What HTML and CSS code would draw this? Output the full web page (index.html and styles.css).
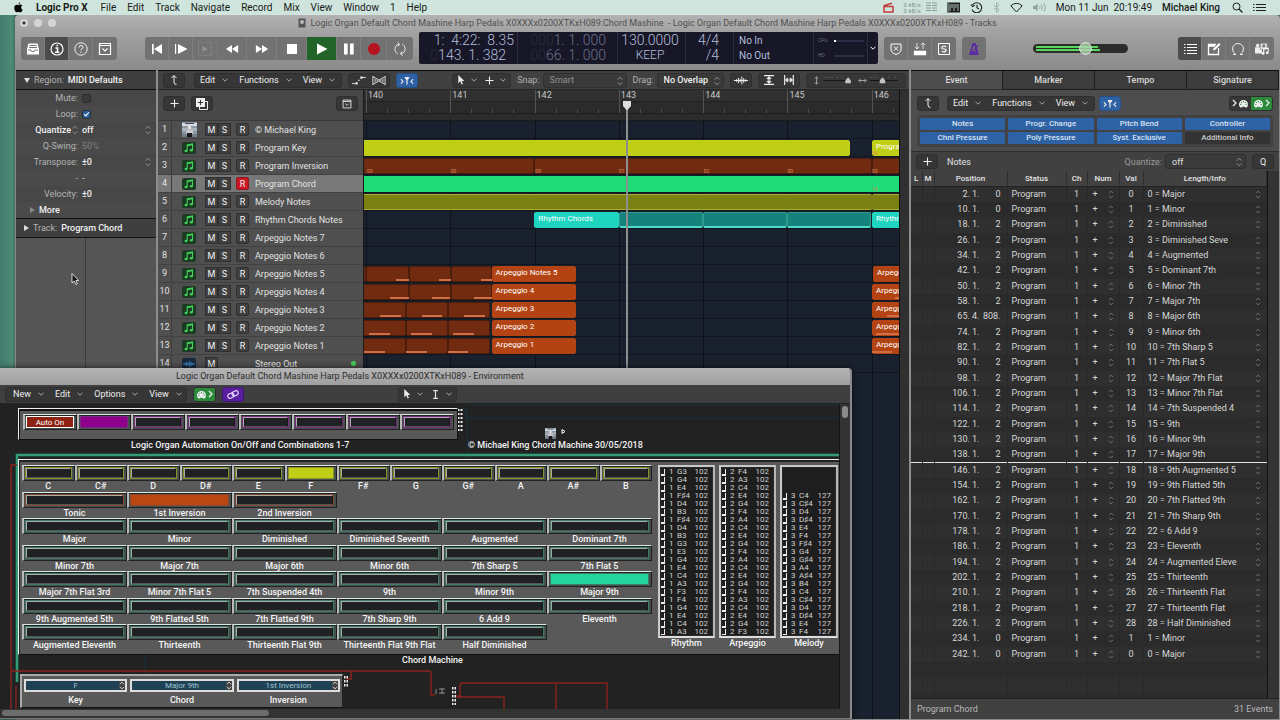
FILE: index.html
```html
<!DOCTYPE html>
<html lang="en">
<head>
<meta charset="utf-8">
<title>Logic Pro X - Tracks</title>
<link rel="stylesheet" href="styles.css">
</head>
<body>
<svg class="defs" aria-hidden="true">
  <symbol id="chev" viewBox="0 0 6 4"><path d="M.5.7 3 3.2 5.500.7" fill="none" stroke="currentColor"/></symbol>
  <symbol id="step" viewBox="0 0 6 10"><path d="M.7 3.600 3 1.200l2.300 2.400M.7 6.400 3 8.800l2.300-2.400" fill="none" stroke="currentColor" stroke-width=".9"/></symbol>
  <symbol id="back" viewBox="0 0 10 12"><path d="M2.500 4 5 1.500 7.500 4M5 1.500V8q0 2.500 2.500 2.500" fill="none" stroke="currentColor"/></symbol>
  <symbol id="catch" viewBox="0 0 16 10"><path d="M1 3.500 3.500 6 1 8.500M15 3.500 12.500 6l2.500 2.500" fill="none" stroke="currentColor" stroke-width="1.200"/><path d="M5.500 1h5v1.500L8.700 4v5.500H7.300V4L5.500 2.500z" fill="currentColor"/></symbol>
  <symbol id="arrow" viewBox="0 0 8 11"><path d="M1 0v9l2.200-2 1.500 3.500 1.500-.7L4.700 6.500h3z" fill="currentColor"/></symbol>
  <symbol id="cross" viewBox="0 0 10 10"><path d="M5 .5v9M.5 5h9" stroke="currentColor" stroke-width="1.200"/></symbol>
  <symbol id="menubox" viewBox="0 0 14 14"><path d="M1.500 1.500h11v11h-11zM1.500 3.500h11M4.500 6.500 7 9l2.500-2.500" fill="none" stroke="currentColor" stroke-width="1.200"/></symbol>
  <symbol id="midi" viewBox="0 0 12 10"><path d="M1 6a5 5 0 0 1 10 0q0 2-1.500 3.500h-2v-1h-3v1h-2Q1 8 1 6z" fill="currentColor"/><g fill="#2c8a3b"><circle cx="3" cy="6" r=".7"/><circle cx="4" cy="3.700" r=".7"/><circle cx="6" cy="2.800" r=".7"/><circle cx="8" cy="3.700" r=".7"/><circle cx="9" cy="6" r=".7"/></g></symbol>
  <symbol id="gt" viewBox="0 0 5 8"><path d="M1 1l3 3-3 3" fill="none" stroke="currentColor" stroke-width="1.300"/></symbol>
  <symbol id="note" viewBox="0 0 12 10"><path d="M4.200 8V2L9.500 1v6" fill="none" stroke="currentColor" stroke-width="1.100"/><path d="M4.200 1.800 9.500.8v1.500l-5.300 1z" fill="currentColor"/><ellipse cx="3" cy="8" rx="1.500" ry="1.200" fill="currentColor"/><ellipse cx="8.300" cy="7.200" rx="1.500" ry="1.200" fill="currentColor"/></symbol>
  <symbol id="wave" viewBox="0 0 16 10"><path d="M0 5h16M3 3.500v3M5 2v6M7 3v4M9 .5v9M11 2.500v5M13 3.500v3" stroke="currentColor" stroke-width="1.100"/></symbol>
  <symbol id="photo" viewBox="0 0 15 15"><path d="M0 0h15v15H0z" fill="#8c97a4"/><path d="M0 1h15v3H0z" fill="#d4dbe4"/><path d="M3 1h9v1H3z" fill="#44484e"/><path d="M0 6h15v3H0z" fill="#a9b3be"/><path d="M0 12h15v3H0z" fill="#737d88"/><circle cx="7.500" cy="5.500" r="1.800" fill="#e4e0da"/><path d="M4.500 8h6l1 4H4z" fill="#c8c8cc"/><path d="M5 11h5v4H5z" fill="#17191c"/></symbol>
</svg>

<header class="menubar">
  <nav class="menus">
    <svg class="apple" viewBox="0 0 10 12"><path d="M6.800.2q.1 1.800-1.700 2.400Q5 .9 6.800.2zM5 3.400c.7 0 1.200-.6 2.200-.6q1.300.1 2 1.100C7.200 5.200 7.600 7.700 9.600 8.400 9 10 8 11.400 7 11.400c-.8 0-1-.4-1.900-.4s-1.200.4-1.900.4C1.700 11.400.3 8.700.3 6.500c0-2.300 1.400-3.600 2.800-3.600.9 0 1.300.5 1.900.5z"/></svg>
    <button class="app">Logic Pro X</button><button>File</button><button>Edit</button><button>Track</button><button>Navigate</button><button>Record</button><button>Mix</button><button>View</button><button>Window</button><button>1</button><button>Help</button>
  </nav>
  <div class="status">
    <svg class="i11" viewBox="0 0 11 11"><path d="M1 4.500h9v5.500H1zM.8 3.800 9 1.200" fill="none" stroke="#c33b3b" stroke-width="1.500"/></svg>
    <span class="rate">0 kB/s<br>0 kB/s</span>
    <svg class="i11" viewBox="0 0 11 11"><path d="M0 1h5M6 1h5M0 3.500h5M6 3.500h5M0 6h5M6 6h5M0 8.500h5M6 8.500h5" stroke="#8b9b94" stroke-width="1.200"/></svg>
    <svg class="i13" viewBox="0 0 13 11"><path d="M0 .5h13v10H0z" fill="#1b1f1d"/><path d="M3 2v7M5 2v4M7 2v7M9 2v4M11 2v7M1 1v9" stroke="#cfe5dc" stroke-width=".8"/></svg>
    <svg class="i13" viewBox="0 0 13 11"><path d="M2.500 3a5 5 0 1 1-.5 4.500M7 2.800v3l2 1.200M1 2.500l1.500 2L4.800 3.300" fill="none" stroke="#1b1f1d" stroke-width="1.100"/></svg>
    <svg class="i7" viewBox="0 0 7 11"><path d="m1 3 5 5-2.500 2.500V.5L6 3 1 8" fill="none" stroke="#a3b3ab"/></svg>
    <svg class="i13" viewBox="0 0 13 11"><path d="M.8 3.800q5.700-5 11.400 0L6.500 10z" fill="none" stroke="#1b1f1d"/></svg>
    <svg class="i13" viewBox="0 0 14 11"><path d="M0 4h2l3-2.500v8L2 7H0z" fill="#93a39b"/><path d="M7 4q1.500 1.500 0 3M9 2.500q2.700 3 0 6M11.500 1q3.500 4.500 0 9" fill="none" stroke="#93a39b"/></svg>
    <span>Mon 11 Jun &nbsp;20:19:49</span>
    <span class="user">Michael King</span>
    <svg class="i11" viewBox="0 0 11 11"><circle cx="4.500" cy="4.500" r="3.500" fill="none" stroke="#1b1f1d"/><path d="m7 7 3.500 3.500" stroke="#1b1f1d" stroke-width="1.300"/></svg>
    <svg class="i13" viewBox="0 0 13 11"><path d="M0 2.500h1.500M3 2.500h10M0 5.500h1.500M3 5.500h10M0 8.500h1.500M3 8.500h10" stroke="#1b1f1d" stroke-width="1.200"/></svg>
  </div>
</header>

<main class="window">
  <div class="titlebar">
    <span class="lights"><i class="dot"></i><i></i><i></i></span>
    <svg class="doc" viewBox="0 0 8 10"><path d="M.5.5h7v9h-7z" fill="#555"/><circle cx="4" cy="4" r="2" fill="#bbb"/></svg>
    <h1>Logic Organ Default Chord Mashine Harp Pedals X0XXXx0200XTKxH089:Chord Mashine&nbsp; - Logic Organ Default Chord Mashine Harp Pedals X0XXXx0200XTKxH089 - Tracks</h1>
  </div>

  <div class="control">
    <div class="cgroup">
      <button aria-label="Library"><svg viewBox="0 0 14 14"><path d="M2.500 1.500h9L13 7v5.500H1V7z" fill="#fff"/><path d="M3.500 3.500h7M3 5.500h8" stroke="#777"/><path d="M2 8h3l.7 1.500h2.600L9 8h3" fill="none" stroke="#777"/></svg></button>
      <button class="on" aria-label="Inspector"><svg viewBox="0 0 14 14"><circle cx="7" cy="7" r="6" fill="none" stroke="#fff" stroke-width="1.200"/><path d="M5.500 6h2v4M5 10.200h4.200M6.500 3.600h1.500" stroke="#fff" stroke-width="1.500" fill="none"/></svg></button>
      <button aria-label="Quick Help"><svg viewBox="0 0 14 14"><circle cx="7" cy="7" r="6.200" fill="none" stroke="#f2f2f2"/><path d="M5 5.500q0-2 2-2t2 1.700q0 1.300-2 2.300v1M7 9.700v1.200" stroke="#f2f2f2" fill="none"/></svg></button>
      <button aria-label="Toolbar"><svg viewBox="0 0 14 14"><use href="#menubox"/></svg></button>
    </div>
    <div class="cgroup transport">
      <button aria-label="To beginning"><svg viewBox="0 0 14 14"><path d="M2 2h1.700v10H2zM12 2v10L4 7z" fill="#fff"/></svg></button>
      <button aria-label="Play from selection"><svg viewBox="0 0 14 14"><path d="M1 2h1.200v10H1zM4 2v10l9.500-5z" fill="#fff"/></svg></button>
      <button class="off" aria-label="Play marquee"><svg viewBox="0 0 16 16"><path d="M.5.500h15v15H.5z" fill="none" stroke="#b5b5b5" stroke-dasharray="1 1"/><path d="M5 4.500v7l6-3.500z" fill="#b5b5b5"/></svg></button>
      <button class="wide" aria-label="Rewind"><svg viewBox="0 0 16 14"><path d="M8 2.500v9L1 7zM15 2.500v9L8 7z" fill="#fff"/></svg></button>
      <button class="wide" aria-label="Forward"><svg viewBox="0 0 16 14"><path d="M1 2.500v9L8 7zM8 2.500v9l7-4.500z" fill="#fff"/></svg></button>
      <button class="wide" aria-label="Stop"><svg viewBox="0 0 14 14"><path d="M2 2h10v10H2z" fill="#fff"/></svg></button>
      <button class="wide play" aria-label="Play"><svg viewBox="0 0 14 14"><path d="M2 1.500v11L12.500 7z" fill="#fff"/></svg></button>
      <button aria-label="Pause"><svg viewBox="0 0 14 14"><path d="M2 1.500h3.700v11H2zM8 1.500h3.700v11H8z" fill="#fff"/></svg></button>
      <button class="mid" aria-label="Record"><svg viewBox="0 0 14 14"><circle cx="7" cy="7" r="6" fill="#b5131d"/></svg></button>
      <button class="mid" aria-label="Cycle"><svg viewBox="0 0 14 14"><path d="M5 12A5.300 5.300 0 0 1 4 3L6 2M9 2a5.300 5.300 0 0 1 1 9l-2 1M4.500.5 6.500 2l-1.300 2.300M9.500 13.500 7.500 12l1.300-2.300" fill="none" stroke="#e6e6e6"/></svg></button>
    </div>
    <div class="lcd">
      <div class="time"><span>1: &nbsp;4:22: &nbsp;8.35</span><span class="in"><i>0</i>143. 1. 382</span></div>
      <div class="loc"><span><i>000</i>1. 1. 000</span><span><i>00</i>66. 1. 000</span></div>
      <div class="tempo"><span>130.0000</span><span class="keep">KEEP</span></div>
      <div class="sig"><span>4/4</span><span>/4</span></div>
      <div class="io"><span>No In</span><span>No Out</span></div>
      <div class="meters"><span>CPU<b><u></u></b></span><span>HD<b></b></span></div>
      <button aria-label="Display mode"><svg class="cv" viewBox="0 0 6 4"><use href="#chev"/></svg></button>
    </div>
    <div class="cgroup">
      <button aria-label="Replace"><svg viewBox="0 0 14 14"><path d="M2 2h10v5q0 4-5 5.500Q2 11 2 7zM5 4.500 9 8.500M9 4.500 5 8.500" fill="none" stroke="#fff"/></svg></button>
      <button aria-label="Autopunch"><svg viewBox="0 0 14 16"><path d="M0 10h14v5H0z" fill="#fff"/><path d="M3.500 1v7M1 5.500 3.500 8 6 5.500M10.500 8V1M8 3.500 10.500 1 13 3.500" fill="none" stroke="#eee"/></svg></button>
      <button aria-label="Solo"><svg viewBox="0 0 14 14"><path d="M1.500 1.500h11v11h-11z" fill="none" stroke="#fff"/><path d="M9 5Q8.500 4 7 4T5 5.500 7 7t2 1.500T7 10 5 9" fill="none" stroke="#fff" stroke-width="1.200"/></svg></button>
    </div>
    <div class="cgroup">
      <button aria-label="Metronome"><svg viewBox="0 0 14 14"><path d="M5.500 1h3l3.500 12H2zM6.300 4 5 9.500h4L7.700 4z" fill="#5b2aa6" fill-rule="evenodd"/><path d="m6 10 5-7" stroke="#5b2aa6" stroke-width="1.200"/></svg></button>
    </div>
    <div class="master"><i></i><i class="b"></i><input type="range" min="0" max="100" value="56" aria-label="Master volume"></div>
    <div class="cgroup last">
      <button class="on" aria-label="List editors"><svg viewBox="0 0 14 14"><path d="M1 2.500h1.500M4 2.500h10M1 5.500h1.500M4 5.500h10M1 8.500h1.500M4 8.500h10M1 11.500h1.500M4 11.500h10" stroke="#fff"/></svg></button>
      <button aria-label="Note pad"><svg viewBox="0 0 14 14"><path d="M9 2.500H1.500v10h10V6M1.500 4H8" fill="none" stroke="#fff" stroke-width="1.300"/><path d="m6 8.500.6-2L12 1l1.500 1.500L8 8z" fill="#fff"/></svg></button>
      <button aria-label="Loops"><svg viewBox="0 0 14 14"><path d="M2 12.500h3Q1.500 10.500 1.500 7a5.500 5.500 0 0 1 11 0q0 3.500-3.500 5.500h3" fill="none" stroke="#eee"/></svg></button>
      <button aria-label="Browsers"><svg viewBox="0 0 16 14"><path d="M0 5h8v7H0z" fill="#eee"/><circle cx="3" cy="3" r="2" fill="#eee"/><path d="M6 .5h8v7H6z" fill="#ddd" stroke="#777" stroke-width=".6"/><circle cx="10" cy="3.500" r="1.700" fill="#777"/><path d="M10 12V7l5-1v5" fill="none" stroke="#fff" stroke-width="1.200"/><circle cx="9.300" cy="12" r="1.500" fill="#fff"/><circle cx="14" cy="11.300" r="1.500" fill="#fff"/></svg></button>
    </div>
  </div>

  <div class="panes">
    <aside class="inspector">
      <h2><b class="tri open"></b><span>Region:</span> MIDI Defaults</h2>
      <div class="params">
        <div><label for="mute">Mute:</label><input type="checkbox" id="mute"></div>
        <div><label for="loop">Loop:</label><input type="checkbox" id="loop" checked></div>
        <div><label class="hot" for="quant">Quantize<svg class="st" viewBox="0 0 6 10"><use href="#step"/></svg></label><output id="quant">off</output><svg class="st" viewBox="0 0 6 10"><use href="#step"/></svg></div>
        <div><span class="lab">Q-Swing:</span><output class="faint">50%</output></div>
        <div><span class="lab">Transpose:</span><output>±0</output><svg class="st" viewBox="0 0 6 10"><use href="#step"/></svg></div>
        <div><span class="lab">-</span><output class="grey">-</output></div>
        <div><span class="lab">Velocity:</span><output>±0</output></div>
        <div class="more"><b class="tri dark"></b>More</div>
      </div>
      <h2 class="tr"><b class="tri"></b><span>Track:</span> Program Chord</h2>
      <div class="strip"></div>
    </aside>

    <section class="tracks">
      <div class="tbar">
        <div class="seg"><button aria-label="Back"><svg class="i12" viewBox="0 0 10 12"><use href="#back"/></svg></button></div>
        <div class="seg menu"><button>Edit<svg class="cv" viewBox="0 0 6 4"><use href="#chev"/></svg></button><button>Functions<svg class="cv" viewBox="0 0 6 4"><use href="#chev"/></svg></button><button>View<svg class="cv" viewBox="0 0 6 4"><use href="#chev"/></svg></button></div>
        <div class="seg"><button aria-label="Automation"><svg class="i14" viewBox="0 0 16 10"><path d="M0 8.500h4M11 1.500h5" stroke="currentColor"/><path d="M4 7h2.500v2.500H4zM9.500.5H12V3H9.500zM7 4h1.500v1.500H7z" fill="currentColor"/></svg></button><button aria-label="Flex"><svg class="i14" viewBox="0 0 16 12"><path d="M1 1v10M15 1v10M1 1.500l7 4 7-4M1 10.500l7-4 7 4M3.500 4v4M6 5v2M10 5v2M12.500 4v4" fill="none" stroke="currentColor"/></svg></button></div>
        <div class="seg blue"><button aria-label="Catch playhead"><svg class="i14" viewBox="0 0 16 10"><use href="#catch"/></svg></button></div>
        <div class="seg tools"><button aria-label="Pointer"><svg class="ar" viewBox="0 0 8 11"><use href="#arrow"/></svg><svg class="cv" viewBox="0 0 6 4"><use href="#chev"/></svg></button><button aria-label="Marquee"><svg class="i9" viewBox="0 0 10 10"><use href="#cross"/></svg><svg class="cv" viewBox="0 0 6 4"><use href="#chev"/></svg></button></div>
        <label for="snap">Snap:</label><span class="sel snap"><select id="snap"><option>Smart</option></select><svg class="st" viewBox="0 0 6 10"><use href="#step"/></svg></span>
        <label for="drag">Drag:</label><span class="sel drag"><select id="drag"><option>No Overlap</option></select><svg class="st" viewBox="0 0 6 10"><use href="#step"/></svg></span>
        <div class="seg"><button aria-label="Waveform zoom"><svg class="i14" viewBox="0 0 16 10"><use href="#wave"/></svg></button></div>
        <div class="seg"><button aria-label="Fit vertically"><svg class="i10" viewBox="0 0 10 10"><path d="M0 .7h10M0 9.300h10M5 2v6M3 4l2-2 2 2M3 6l2 2 2-2" fill="none" stroke="currentColor" stroke-width="1.200"/></svg></button><button aria-label="Fit horizontally"><svg class="i10" viewBox="0 0 10 10"><path d="M.7 0v10M9.300 0v10M2 5h6M4 3 2 5l2 2M6 3l2 2-2 2" fill="none" stroke="currentColor" stroke-width="1.200"/></svg></button></div>
        <div class="seg zooms"><svg viewBox="0 0 100 14"><path d="M7.500 3v8M5.500 5l2-2 2 2M5.500 9l2 2 2-2M53 7h8M55 5l-2 2 2 2M59 5l2 2-2 2" fill="none" stroke="#aaa"/><path d="M15 7h30M65 7h30" stroke="#111"/><path d="M16 3v1M19 3v1M22 3v1M25 3v1M30 3v1M35 3v1M66 3v1M69 3v1M72 3v1M85 3v1M92 3v1" stroke="#777"/><path d="M41.500 3.500 38.500 7v3h6V7zM78.500 3.500 75.500 7v3h6V7z" fill="#c4c4c4"/></svg></div>
      </div>
      <div class="arrange">
        <div class="heads">
          <div class="addbar">
            <div class="seg"><button aria-label="Add track"><svg class="i9" viewBox="0 0 10 10"><use href="#cross"/></svg></button></div>
            <div class="seg"><button aria-label="Duplicate track"><svg class="i12" viewBox="0 0 12 12"><path d="M3.500 3.500h8v8h-8z" fill="none" stroke="currentColor"/><path d="M0 0h9v9H0z" fill="currentColor"/><path d="M4.500 2v5M2 4.500h5" stroke="#333"/></svg></button></div>
            <div class="seg end"><button aria-label="Header options"><svg class="i10" viewBox="0 0 14 14"><use href="#menubox"/></svg></button></div>
          </div>
          <ol id="heads"></ol>
        </div>
        <div class="timeline">
          <div class="ruler" id="ruler"></div>
          <div class="lanes" id="lanes"></div>
          <div class="playhead"><svg viewBox="0 0 10 10"><path d="M1 0h8v5L5 9.500 1 5z" fill="#dedede"/></svg></div>
        </div>
        <div class="vstrip"></div>
      </div>
    </section>

    <section class="lists">
      <div class="tabs" role="tablist"><button role="tab" class="cur">Event</button><button role="tab">Marker</button><button role="tab">Tempo</button><button role="tab">Signature</button></div>
      <div class="lbar">
        <div class="seg"><button aria-label="Back"><svg class="i12" viewBox="0 0 10 12"><use href="#back"/></svg></button></div>
        <div class="seg menu"><button>Edit<svg class="cv" viewBox="0 0 6 4"><use href="#chev"/></svg></button><button>Functions<svg class="cv" viewBox="0 0 6 4"><use href="#chev"/></svg></button><button>View<svg class="cv" viewBox="0 0 6 4"><use href="#chev"/></svg></button></div>
        <div class="seg blue"><button aria-label="Catch playhead"><svg class="i14" viewBox="0 0 16 10"><use href="#catch"/></svg></button></div>
        <div class="seg end midi"><button aria-label="MIDI in"><svg class="gt" viewBox="0 0 5 8"><use href="#gt"/></svg><svg class="md" viewBox="0 0 12 10"><use href="#midi"/></svg></button><button class="go" aria-label="MIDI out"><svg class="md" viewBox="0 0 12 10"><use href="#midi"/></svg><svg class="gt" viewBox="0 0 5 8"><use href="#gt"/></svg></button></div>
      </div>
      <div class="filters"><button>Notes</button><button>Progr. Change</button><button>Pitch Bend</button><button>Controller</button><button>Chnl Pressure</button><button>Poly Pressure</button><button>Syst. Exclusive</button><button class="no">Additional Info</button></div>
      <div class="addrow">
        <div class="seg"><button aria-label="Add event"><svg class="i9" viewBox="0 0 10 10"><use href="#cross"/></svg></button></div>
        <span>Notes</span>
        <label for="q">Quantize:</label><span class="sel q"><select id="q"><option>off</option></select><svg class="st" viewBox="0 0 6 10"><use href="#step"/></svg></span>
        <div class="seg"><button>Q</button></div>
      </div>
      <div class="events">
        <table>
          <colgroup><col class="c1"><col class="c2"><col class="c3"><col class="c4"><col class="c5"><col class="c6"><col class="c7"><col></colgroup>
          <thead><tr><th>L</th><th>M</th><th>Position</th><th>Status</th><th>Ch</th><th>Num</th><th>Val</th><th>Length/Info</th></tr></thead>
          <tbody id="events"></tbody>
        </table>
        <div class="gutter"></div>
      </div>
      <footer><span>Program Chord</span><span>31 Events</span></footer>
    </section>
  </div>
</main>

<section class="env">
  <h2>Logic Organ Default Chord Mashine Harp Pedals X0XXXx0200XTKxH089 - Environment</h2>
  <div class="ebar">
    <div class="seg menu"><button>New<svg class="cv" viewBox="0 0 6 4"><use href="#chev"/></svg></button><button>Edit<svg class="cv" viewBox="0 0 6 4"><use href="#chev"/></svg></button><button>Options<svg class="cv" viewBox="0 0 6 4"><use href="#chev"/></svg></button><button>View<svg class="cv" viewBox="0 0 6 4"><use href="#chev"/></svg></button></div>
    <div class="seg go"><button aria-label="MIDI out"><svg class="md" viewBox="0 0 12 10"><use href="#midi"/></svg><svg class="gt" viewBox="0 0 5 8"><use href="#gt"/></svg></button></div>
    <div class="seg link"><button aria-label="Link"><svg class="i14" viewBox="0 0 14 12"><g fill="none" stroke="#ece0ff" stroke-width="1.200"><rect x="1" y="5" width="7" height="5" rx="2.500" transform="rotate(-25 4 7)"/><rect x="6" y="2" width="7" height="5" rx="2.500" transform="rotate(-25 10 5)"/></g></svg></button></div>
    <div class="seg tools"><button aria-label="Pointer"><svg class="ar" viewBox="0 0 8 11"><use href="#arrow"/></svg><svg class="cv" viewBox="0 0 6 4"><use href="#chev"/></svg></button><button aria-label="Text tool"><svg class="i9" viewBox="0 0 10 10"><path d="M2.500.7h5M2.500 9.300h5M5 .7v8.600" stroke="currentColor" stroke-width="1.200"/></svg><svg class="cv" viewBox="0 0 6 4"><use href="#chev"/></svg></button></div>
  </div>
  <div class="stage">
    <div class="canvas">
      <svg class="cables" viewBox="0 0 840 305" aria-hidden="true">
        <g fill="none">
          <path d="M12 305V50h8M145 12V5h322v50M145 1v304M466 14h374M466 5v9M466 1h374" stroke="#17313d"/>
          <path d="M17 278V51h823" stroke="#1d6e52" stroke-width="3"/><path d="M17 278V51h823" stroke="#4fc79c"/>
          <path d="M17 61h-6v244M11 267h418q2 0 2 3v21h4M345 275h6v-8M16 282v23M454 292h6v-10q0-3 3-3h144v26M556 279v26M457 293h47v12" stroke="#8a231c" stroke-width="1.400"/>
        </g>
        <path d="M460 5v22" stroke="#eee" stroke-width="5" stroke-dasharray="2 2"/>
        <path d="M460 5v22" stroke="#222" stroke-width="1"/>
        <path d="M346 272v12M454 283v18" stroke="#eee" stroke-width="4" stroke-dasharray="2.500 1.500"/>
        <path d="M346 272v12M454 283v18" stroke="#222"/>
        <path d="M436 290v-5M439 285h6M439 289h6M442 284v6" stroke="#888"/>
      </svg>
      <div class="node autop" id="auto"></div>
      <p class="node cap cap1">Logic Organ Automation On/Off and Combinations 1-7</p>
      <svg class="node pic" viewBox="0 0 15 15"><use href="#photo"/></svg>
      <svg class="node jack" viewBox="0 0 5 5"><path d="M1 .5 4 2.500 1 4.500z" fill="#222" stroke="#fff"/></svg>
      <p class="node cap cap2">© Michael King Chord Machine 30/05/2018</p>
      <div class="node machine">
        <div class="pads" id="pads"></div>
        <div class="mons" id="mons"></div>
      </div>
      <p class="node cap cap3">Chord Machine</p>
      <div class="node picks">
        <label>
          <span class="sel"><select><option>F</option></select><svg class="st" viewBox="0 0 6 10"><use href="#step"/></svg></span>Key</label>
        <label>
          <span class="sel"><select><option>Major 9th</option></select><svg class="st" viewBox="0 0 6 10"><use href="#step"/></svg></span>Chord</label>
        <label>
          <span class="sel"><select><option>1st Inversion</option></select><svg class="st" viewBox="0 0 6 10"><use href="#step"/></svg></span>Inversion</label>
      </div>
    </div>
    <div class="vscroll"><i></i></div>
  </div>
  <div class="hscroll"><i></i></div>
</section>

<svg class="pointer" viewBox="0 0 8 12"><path d="M1 .5v9.500l2.200-2L4.700 11.500l1.600-.7L4.900 7.500h2.800z" fill="#111" stroke="#fff" stroke-width=".8"/></svg>
<script src="app.js"></script>
</body>
</html>
```
FILE: styles.css
```css
* { box-sizing: border-box; margin: 0; padding: 0; }
body { font: 9px/12px Roboto, "Liberation Sans", sans-serif; height: 100vh; min-height: 720px; display: flex; flex-direction: column; position: relative; overflow: hidden; color: #e2e2e2; background: linear-gradient(90deg, #3f7c6a, #508a78 12px, #3e6457 16px); }
button, select, input { font: inherit; color: inherit; background: none; border: 0; }
button { display: flex; align-items: center; justify-content: center; white-space: nowrap; }
i, u { font-style: normal; text-decoration: none; }
ol { list-style: none; }
.defs { position: absolute; width: 0; height: 0; }
svg { display: block; flex: none; }

.menubar { height: 15px; flex: none; display: flex; justify-content: space-between; align-items: center; background: #cfe4dc; color: #161a18; font-size: 10px; padding: 0 14px; }
.menus, .status { display: flex; align-items: center; }
.menus { gap: 11px; }
.apple { width: 9px; height: 11px; margin-right: 2px; }
.app { font-weight: 700; margin-right: 2px; }
.status { gap: 10px; }
.rate { font-size: 6px; line-height: 6px; color: #7f8f88; margin-right: -5px; }
.i7 { width: 7px; height: 11px; }
.i9 { width: 9px; height: 9px; }
.i10 { width: 10px; height: 10px; }
.i11 { width: 11px; height: 11px; }
.i12 { width: 12px; height: 12px; }
.i13 { width: 13px; height: 11px; }
.i14 { width: 14px; height: 11px; }
.user { font-weight: 500; margin-right: 2px; }

.window { flex: 1; min-height: 0; margin-left: 15px; display: flex; flex-direction: column; background: linear-gradient(#b2b2b2, #a3a3a3 16px, #8b8b8b 54px, #8b8b8b); border-radius: 4px 4px 0 0; padding: 0 1px 1px 1px; }
.titlebar { height: 16px; flex: none; display: flex; align-items: center; justify-content: center; position: relative; color: #505050; }
.titlebar h1 { font-size: 9px; font-weight: 400; white-space: nowrap; }
.doc { width: 8px; height: 10px; margin-right: 4px; }
.lights { position: absolute; left: 4px; top: 4px; display: flex; gap: 6px; }
.lights i { width: 8px; height: 8px; border-radius: 50%; background: #d4d4d4; }
.lights .dot { background: radial-gradient(#333 1px, #d4d4d4 2px); }
.control { height: 39px; flex: none; display: flex; align-items: center; padding: 0 5px 4px 5px; gap: 6px; }
.cgroup { display: flex; height: 23px; border-radius: 3px; background: #727272; overflow: hidden; flex: none; }
.cgroup button { width: 24px; border-right: 1px solid #7e7e7e; color: #fff; }
.cgroup button:last-child { border-right: 0; }
.cgroup svg { width: 14px; height: 14px; }
.cgroup .on { background: #4b4b4b; }
.transport { margin-left: 22px; }
.transport button.wide { width: 30px; }
.transport button.mid { width: 26px; }
.transport .play { background: #226329; }
.transport .off { opacity: .5; }
.lcd { flex: 0 1 459px; height: 32px; display: flex; background: #171728; color: #b3bedb; font-size: 14px; line-height: 15px; font-weight: 300; border-radius: 2px; margin-top: -1px; }
.lcd > div { border-right: 1px solid #2b2b42; padding: 1px 3px 0 0; display: flex; flex-direction: column; text-align: right; white-space: nowrap; }
.lcd i { color: #2b2b3f; }
.lcd .time { width: 99px; }
.lcd .in { padding-right: 8px; }
.lcd .loc { width: 100px; padding-right: 11px; color: #6b7188; }
.lcd .tempo { width: 68px; text-align: center; }
.lcd .keep { font-size: 12px; }
.lcd .sig { width: 48px; padding-right: 14px; }
.lcd .io { width: 80px; font-size: 10px; text-align: left; padding-left: 5px; font-weight: 400; }
.lcd .meters { flex: 1; font-size: 5px; padding-left: 4px; }
.meters span { display: flex; align-items: center; justify-content: space-between; color: #8b90a5; }
.meters b { width: 30px; height: 2px; background: #2c2c44; }
.meters u { display: block; width: 2px; height: 2px; background: #fff; }
.lcd button { width: 10px; }
.cv { width: 6px; height: 4px; color: #a8a8a8; margin-left: 7px; }
.lcd .cv { color: #fff; margin: 0; }
.master { width: 95px; height: 9px; border-radius: 5px; background: #2b2b29; margin-left: auto; position: relative; padding: 2px 3px; display: flex; flex-direction: column; gap: 1px; }
.master i { height: 2px; width: 62px; background: #55d85d; }
.master .b { width: 64px; }
.master input { position: absolute; inset: -3px 0; width: 95px; height: 15px; appearance: none; }
.master input::-webkit-slider-thumb { appearance: none; width: 13px; height: 13px; border-radius: 50%; background: #b3d8b3cc; border: 1px solid #ddd; }
.last { margin-left: 44px; }

.panes { flex: 1; min-height: 0; display: flex; gap: 2px; background: #8d8d8d; }
.panes > * { border-top: 1px solid #0c0c0c; }
.inspector { width: 140px; flex: none; background: #555; display: flex; flex-direction: column; }
.inspector h2 { font-size: 9px; font-weight: 500; height: 19px; display: flex; align-items: center; gap: 4px; padding-left: 8px; background: #3f3f3f; border-bottom: 1px solid #111; color: #f0f0f0; }
.inspector h2 span { color: #b4b4b4; font-weight: 400; }
.tri { border: 3px solid transparent; border-left: 5px solid #ddd; border-right: 0; }
.tri.open { border: 3px solid transparent; border-top: 5px solid #ddd; border-bottom: 0; }
.tri.dark { border-left-color: #888; margin-right: 4px; }
.params { background: #4a4a4a; border-bottom: 1px solid #111; }
.params div { height: 16px; display: flex; align-items: center; gap: 4px; padding-right: 5px; }
.params div:nth-child(odd) { background: #474747; }
.params div > :first-child:not(b) { width: 62px; text-align: right; color: #b4b4b4; flex: none; }
.params output { flex: 1; color: #f0f0f0; font-weight: 500; }
.params .faint { color: #757575; }
.params .grey { color: #b4b4b4; }
.params div > label.hot:first-child { color: #f0f0f0; display: flex; align-items: center; justify-content: flex-end; gap: 1px; font-weight: 500; }
.params input { appearance: none; width: 9px; height: 9px; border-radius: 2px; background: #3a3a3a; border: 1px solid #2c2c2c; }
.params input:checked { background: #2c5f9e; position: relative; }
.params input:checked::after { content: ""; position: absolute; left: 2px; top: 0; width: 2px; height: 4px; border: solid #fff; border-width: 0 1px 1px 0; transform: rotate(40deg); }
.params .more { padding-left: 14px; gap: 0; color: #f0f0f0; font-weight: 500; }
.st { width: 6px; height: 10px; color: #9a9a9a; }
.strip { flex: 1; background: linear-gradient(90deg, #555 69px, #3c3c3c 69px, #3c3c3c 70px, #555 70px); }

.tracks { flex: 1; min-width: 0; display: flex; flex-direction: column; background: #484848; }
.tbar { height: 19px; flex: none; display: flex; align-items: center; padding: 0 5px; gap: 6px; background: #414141; border-bottom: 1px solid #262626; overflow: hidden; }
.seg { display: flex; height: 15px; border-radius: 3px; background: #363636; border: 1px solid #2f2f2f; color: #eee; overflow: hidden; flex: none; }
.seg button { min-width: 20px; padding: 0 3px; }
.seg.menu button { padding: 0 6px 0 5px; }
.seg.blue { background: #2f62a5; border-color: #27508a; }
.seg.tools button { padding: 0 4px; }
.seg.tools .cv { margin-left: 6px; }
.ar { width: 8px; height: 10px; }
.tbar .seg:nth-child(2) { margin-left: 3px; }
.tbar .tools { margin-left: 28px; }
.tbar label { color: #b0b0b0; margin-right: -3px; }
.zooms { width: 100px; }
.zooms svg { width: 98px; height: 13px; }
.sel { position: relative; display: flex; height: 15px; border-radius: 3px; background: #3a3a3a; border: 1px solid #2f2f2f; flex: none; }
.sel select { appearance: none; width: 100%; padding-left: 6px; outline: 0; line-height: 12px; }
.sel .st { position: absolute; right: 3px; top: 2px; }
.snap { width: 84px; color: #909090; }
.drag { width: 67px; color: #f0f0f0; font-weight: 500; }
.arrange { flex: 1; min-height: 0; display: flex; }
.heads { width: 205px; flex: none; background: #484848; }
.addbar { height: 31px; display: flex; align-items: center; gap: 6px; padding: 0 5px 3px; border-bottom: 1px solid #3a3a3a; }
.end { margin-left: auto; }
.heads li { height: 18px; display: flex; align-items: center; background: #4f4f4f; border-bottom: 1px solid #414141; }
.heads li.cur { background: #787878; }
.num { width: 14px; text-align: center; border-right: 1px solid #3d3d3d; line-height: 17px; }
.ico { width: 14px; height: 12px; margin: 0 9px 0 10px; background: #1d3a22; color: #42d25a; border-radius: 2px; padding: 1px; }
.ico.ph { width: 15px; height: 15px; margin-right: 8px; padding: 0; background: none; border-radius: 0; }
.ico.au { background: #17293b; color: #3f88c8; }
.tb { width: 13px; height: 13px; font-size: 9px; background: #404040; border: 1px solid #303030; color: #f2f2f2; }
.tb.r { margin: 0 6px 0 5px; border-radius: 2px; }
.tb.r.armed { background: #c81723; border-color: #8d1820; }
.tb.none { visibility: hidden; }
.nm { flex: 1; }
.led { width: 5px; height: 5px; border-radius: 50%; background: #48cf58; margin-right: 7px; }
.timeline { flex: 1; min-width: 0; position: relative; display: flex; flex-direction: column; background: #18212d; border-left: 1px solid #1a1a1a; overflow: hidden; }
.ruler { height: 31px; flex: none; position: relative; background: linear-gradient(#303030 11px, #202020 11px, #202020 12px, #2b2b2b 12px, #2b2b2b 23px, #1d1d1d 23px, #1d1d1d 24px, #2b2b2b 24px); border-bottom: 1px solid #1a1a1a; }
.ruler span { position: absolute; top: 0; height: 23px; padding-left: 1px; border-left: 1px solid #555; font-size: 9px; line-height: 11px; color: #c8c8c8; }
.ruler u { position: absolute; top: 19px; height: 4px; width: 1px; background: #4c4c4c; }
.lanes { flex: 1; position: relative; }
.lane { height: 18px; position: relative; border-bottom: 1px solid #0f161e; }
.bar { position: absolute; top: 0; bottom: 0; width: 1px; background: #0d131b; }
.reg { position: absolute; top: 1px; height: 16px; border-radius: 2px; font-size: 8px; line-height: 11px; color: #fff; padding-left: 3px; white-space: nowrap; overflow: hidden; border: 1px solid #0005; }
.wire { position: absolute; bottom: 1px; height: 2px; background: #cf6f48; }
.tag { position: absolute; bottom: 0; font-size: 5px; line-height: 5px; color: #e08a60; }
.yel { background: #bfcf15; border-color: #bfcf15; }
.brn { background: #702b10; border-color: #4d1d0b; }
.grn { background: #1fdc78; border-color: #1fdc78; }
.olv { background: #7a8012; border-color: #a9ad30; border-width: 1px 0; }
.cyn { background: #1fd5c0; border-color: #1fd5c0; }
.cyn2 { background: #15837b; border-color: #2c9a90; border-bottom: 2px solid #4fdccb; }
.org { background: #b34312; border-color: #b34312; }
.playhead { position: absolute; left: 49%; top: 11px; bottom: 0; width: 2px; background: #8e8e8e; }
.playhead svg { width: 10px; height: 10px; margin-left: -4px; }
.vstrip { width: 10px; flex: none; background: #303030; border-left: 1px solid #111; }

.lists { width: 368px; flex: none; display: flex; flex-direction: column; background: #4d4d4d; min-height: 0; }
.tabs { display: grid; grid-template-columns: repeat(4, 1fr); height: 19px; flex: none; }
.tabs button { background: #3c3c3c; border-right: 1px solid #1c1c1c; border-bottom: 1px solid #1c1c1c; font-weight: 500; color: #d8d8d8; }
.tabs .cur { background: #4d4d4d; border-bottom-color: #333; }
.lbar { display: flex; height: 25px; flex: none; align-items: center; gap: 6px; padding: 1px 6px 0 6px; }
.lbar .menu { margin-left: 2px; }
.lbar .blue { margin-left: -2px; }
.seg .gt { width: 5px; height: 8px; }
.midi button, .go button { gap: 1px; padding: 0 2px; }
.go { background: #2c8a3b; }
.md { width: 11px; height: 9px; }
.filters { display: grid; grid-template-columns: repeat(4, 1fr); gap: 2px 3px; margin: 0 6px; padding: 3px; background: #424242; border-radius: 3px; }
.filters button { height: 12px; background: #2f62a5; border-radius: 1px; font-size: 8px; font-weight: 500; color: #d7e3f2; }
.filters .no { background: #333; color: #ccc; }
.addrow { display: flex; align-items: center; height: 20px; margin-top: 4px; padding: 0 5px; gap: 3px; background: #414141; border-top: 1px solid #2c2c2c; }
.addrow .seg:first-child { margin-right: 6px; }
.addrow label { margin-left: auto; color: #9a9a9a; }
.addrow .q { width: 81px; margin-right: 3px; }
.events { flex: 1; min-height: 0; display: flex; overflow: hidden; background: #2f2f2f; }
table { flex: 1; border-collapse: collapse; table-layout: fixed; width: 100%; align-self: flex-start; }
.c1 { width: 11px; } .c2 { width: 12px; } .c3 { width: 73px; } .c4 { width: 59px; } .c5 { width: 21px; } .c6 { width: 32px; } .c7 { width: 24px; }
th { height: 15px; line-height: 13px; background: #414141; border-right: 1px solid #2f2f2f; border-bottom: 1px solid #222; font-size: 8px; font-weight: 500; color: #e4e4e4; }
td { height: 15px; line-height: 15px; border-right: 1px solid #292929; white-space: nowrap; text-align: center; color: #d8d8d8; }
tr:nth-child(3n) td { height: 16px; }
tr:nth-child(even) td { background: #2b2b2b; }
td.s { text-align: left; padding-left: 4px; }
td.l { border-right: 0; }
.two { display: flex; align-items: center; justify-content: space-between; }
.pos .two { padding-right: 6px; justify-content: flex-end; }
.pos .two span:last-child { width: 21px; text-align: right; }
.n .two { padding: 0 5px; }
.l .two { padding: 0 6px 0 4px; }
td .st { color: #7d7d7d; height: 9px; width: 6px; }
tr.now td { box-shadow: inset 0 -1px #e6e6e6; }
.gutter { width: 12px; flex: none; background: #343434; border-left: 1px solid #111; }
footer { height: 21px; flex: none; display: flex; align-items: center; justify-content: space-between; padding: 0 6px; background: #414141; color: #b8b8b8; border-top: 1px solid #222; }

.env { position: absolute; left: 0; top: 368px; bottom: 1px; width: calc(100% - 428px); display: flex; flex-direction: column; background: #252525; border-right: 2px solid #8a8a8a; border-bottom: 1px solid #777; border-radius: 0 4px 0 0; box-shadow: 0 0 6px #000a; overflow: hidden; }
.env h2 { height: 17px; flex: none; font-size: 9px; font-weight: 400; line-height: 17px; color: #2d2d2d; padding-left: 176px; background: linear-gradient(#b4b4b4, #9f9f9f); white-space: nowrap; }
.ebar { height: 19px; flex: none; display: flex; align-items: center; gap: 6px; padding-left: 5px; background: #3f3f3f; border-bottom: 1px solid #222; }
.ebar .menu button { padding: 0 4px 0 7px; }
.ebar .go { background: #2c8a3b; }
.ebar .link { background: #5a1fa0; border-color: #3f1773; }
.ebar .tools { margin-left: 148px; }
.stage { flex: 1; min-height: 0; display: flex; }
.canvas { flex: 1; position: relative; overflow: hidden; background: #222; }
.cables { position: absolute; left: 0; top: 0; width: 840px; height: 305px; }
.node { position: absolute; }
.cap { color: #f4f4f4; font-weight: 500; white-space: nowrap; line-height: 10px; }
.cap1 { left: 131px; top: 36px; }
.cap2 { left: 468px; top: 36px; }
.cap3 { left: 402px; top: 251px; }
.pic { left: 545px; top: 24px; width: 11px; height: 11px; }
.jack { left: 561px; top: 25px; width: 5px; height: 5px; }
.autop { left: 18px; top: 4px; width: 440px; height: 32px; border: 1px solid #eee; border-right-color: #111; border-bottom-color: #111; padding: 5px 3px 2px 4px; background: #595959; box-shadow: inset 1px 2px #111; display: grid; grid-template-columns: repeat(8, 1fr); align-items: start; }
.pad { display: block; width: 100%; height: 16px; --c: #3d7a68; border: solid; border-width: 1px 1px 1px 2px; border-color: #d8e8e2 #1d1d1d #222 #b9b9b9; padding: 2px 3px 2px 2px; background: linear-gradient(#222 1px, #46504d 1px); }
.pad span { display: block; height: 100%; background: #1f2124; border: 1px solid; border-color: #a9aeab #1a1a1a #555 #a9a9a9; outline: 1px solid var(--c); font-size: 8px; line-height: 9px; color: #fff; }
.pad.k { --c: #8c912a; }
.pad.o { --c: #87492f; }
.pad.p { --c: #7a2c80; }
.pad.k.lit span { background: #bfcf15; border-color: #bfcf15; }
.pad.o.lit span { background: #b84714; border-color: #b84714; }
.pad.c.lit span { background: #25d59b; border-color: #25d59b; }
.pad.p.lit span { background: #8f008f; border-color: #8f008f; }
.pad.p.red span { background: #8c2313; border-color: #8c2313; outline-color: #fff; }
.machine { left: 18px; top: 55px; width: 824px; height: 196px; border: 1px solid #eee; border-bottom-color: #111; padding: 5px 3px 0; background: #595959; box-shadow: inset 1px 2px #222; display: flex; gap: 6px; }
.pads { width: 630px; flex: none; display: grid; grid-template-columns: repeat(12, 1fr); grid-template-rows: 27px 26px 27px 26px 27px 26px 27px; }
.cell { grid-column: span 2; text-align: center; color: #f4f4f4; font-weight: 500; line-height: 10px; white-space: nowrap; }
.cell.one { grid-column: span 1; }
.cell.gap { grid-column: span 6; }
.mons { display: grid; grid-template-columns: 57px 57px 58px; gap: 4px; align-items: start; }
.mon { text-align: center; color: #f4f4f4; font-weight: 500; line-height: 11px; }
.mon ol { height: 173px; background: #1e1e1e; border: 2px solid; border-color: #c9c9c9 #b5b5b5 #ddd #ccc; outline: 1px solid #2a2a2a; outline-offset: -3px; padding: 2px 5px 0 1px; display: flex; flex-direction: column; justify-content: flex-end; overflow: hidden; }
.mon li { display: grid; grid-template-columns: 8px 8px 1fr auto; font-size: 8px; line-height: 8px; height: 8px; font-weight: 400; color: #d2d2d2; text-align: left; }
.mon li::before { content: ""; width: 3px; height: 5px; border-right: 1px solid #eee; border-bottom: 2px solid #eee; margin-top: 1px; }
.picks { left: 20px; top: 270px; width: 323px; height: 34px; border: 2px solid #aaa; border-right: 1px solid #222; border-bottom: 1px solid #111; background: #595959; padding: 3px 2px 0; display: grid; grid-template-columns: repeat(3, 1fr); gap: 3px; }
.picks label { text-align: center; color: #f4f4f4; font-weight: 500; line-height: 16px; }
.picks .sel { height: 13px; background: #1e4253; border: 2px solid #ddd; border-radius: 0; color: #9fc4d3; font-weight: 400; font-size: 8px; }
.picks select { text-align: center; text-align-last: center; line-height: 8px; padding: 0; }
.picks .sel .st { top: 0; right: 0; height: 9px; color: #eee; background: #444; }
.vscroll { width: 11px; flex: none; background: #333; border-left: 1px solid #151515; padding: 2px; }
.vscroll i { display: block; width: 6px; height: 12px; border-radius: 3px; background: #8b8b8b; }
.hscroll { height: 9px; flex: none; background: #333; padding: 1px 2px; }
.hscroll i { display: block; width: 267px; height: 6px; border-radius: 3px; background: #6d6d6d; }
.pointer { position: absolute; left: 71px; top: 273px; width: 8px; height: 12px; }
```
FILE: app.js
```js
const $ = id => document.getElementById(id);
const use = (id, cls, vb) => `<svg class="${cls}" viewBox="${vb}"><use href="#${id}"/></svg>`;

// Track headers
const tracks = ['© Michael King', 'Program Key', 'Program Inversion', 'Program Chord', 'Melody Notes', 'Rhythm Chords Notes',
  'Arpeggio Notes 7', 'Arpeggio Notes 6', 'Arpeggio Notes 5', 'Arpeggio Notes 4', 'Arpeggio Notes 3', 'Arpeggio Notes 2', 'Arpeggio Notes 1', 'Stereo Out'];
$('heads').innerHTML = tracks.map((t, i) => {
  const out = i === 13;
  const icon = i === 0 ? use('photo', 'ico ph', '0 0 15 15') : out ? use('wave', 'ico au', '0 0 16 10') : use('note', 'ico', '0 0 12 10');
  return `<li class="${i === 3 ? 'cur' : ''}"><span class="num">${i + 1}</span>${icon}<button class="tb">M</button><button class="tb ${out ? 'none' : ''}">S</button><button class="tb r ${i === 3 ? 'armed' : ''} ${out ? 'none' : ''}">R</button><span class="nm">${t}</span>${out ? '<i class="led"></i>' : ''}</li>`;
}).join('');

// Timeline: 537 units across the visible range, one bar is 84.6 units
const pc = u => (u / 537 * 100) + '%';
const bars = [140, 141, 142, 143, 144, 145, 146].map((n, i) => [n, 2 + i * 84.6]);
$('ruler').innerHTML = bars.map(([n, u]) => `<span style="left:${pc(u)}">${n}</span>` +
  [1, 2, 3].map(q => `<u style="left:${pc(u + q * 21.15)}"></u>`).join('')).join('');
const lanes = {
  1: [['yel', -5, 488], ['yel', 510, 600, 'Program']],
  2: [['brn', -5, 171], ['brn', 171, 510], ['brn', 510, 600]],
  3: [['grn', -5, 600]],
  4: [['olv', -5, 510], ['olv', 510, 600]],
  5: [['cyn', 171, 256, 'Rhythm Chords'], ['cyn2', 256, 340], ['cyn2', 340, 425], ['cyn2', 425, 509], ['cyn', 510, 600, 'Rhythm']],
  8: [['brn', -5, 2], ['brn', 2, 45], ['brn', 45, 87], ['brn', 87, 128], ['org', 128, 213, 'Arpeggio Notes 5'], ['org', 511, 600, 'Arpeggio']],
  9: [['brn', -5, 45], ['brn', 45, 87], ['brn', 87, 128], ['org', 128, 213, 'Arpeggio 4'], ['org', 510, 600, 'Arpeggio']],
  10: [['brn', -5, 42], ['brn', 42, 84], ['brn', 84, 126], ['org', 128, 213, 'Arpeggio 3'], ['org', 510, 600, 'Arpeggio']],
  11: [['brn', -5, 42], ['brn', 42, 84], ['brn', 84, 126], ['org', 128, 213, 'Arpeggio 2'], ['org', 510, 600, 'Arpeggio']],
  12: [['brn', -5, 42], ['brn', 42, 84], ['brn', 84, 126], ['org', 128, 213, 'Arpeggio 1'], ['org', 510, 600, 'Arpeggio']]
};
const wires = {
  8: [[32, 45], [75, 87], [117, 128]], 9: [[26, 45], [68, 86], [110, 128], [533, 545]], 10: [[16, 37], [58, 78], [100, 121], [525, 545]],
  11: [[5, 26], [47, 68], [89, 110], [514, 545]], 12: [[0, 21], [42, 63], [84, 104], [510, 530]]
};
const tags = { 1: [[510, '06']], 2: [[3, '03'], [87, '00'], [172, '00'], [256, '01'], [341, '02'], [425, '00'], [510, '00']], 3: [[510, '16']] };
$('lanes').innerHTML = bars.map(([, u]) => `<i class="bar" style="left:${pc(u)}"></i>`).join('') +
  tracks.map((_, i) => '<div class="lane">' +
    (lanes[i] || []).map(([c, a, b, t = '']) => `<div class="reg ${c}" style="left:${pc(a)};width:${pc(b - a)}">${t}</div>`).join('') +
    (wires[i] || []).map(([a, b]) => `<i class="wire" style="left:${pc(a)};width:${pc(b - a)}"></i>`).join('') +
    (tags[i] || []).map(([a, t]) => `<i class="tag" style="left:${pc(a)}">${t}</i>`).join('') + '</div>').join('');

// Event list
const info = ['Major', 'Minor', 'Diminished', 'Diminished Seve', 'Augmented', 'Dominant 7th', 'Minor 7th', 'Major 7th', 'Major 6th', 'Minor 6th',
  '7th Sharp 5', '7th Flat 5', 'Major 7th Flat', 'Minor 7th Flat', '7th Suspended 4', '9th', 'Minor 9th', 'Major 9th', '9th Augmented 5',
  '9th Flatted 5th', '7th Flatted 9th', '7th Sharp 9th', '6 Add 9', 'Eleventh', 'Augmented Eleve', 'Thirteenth', 'Thirteenth Flat', 'Thirteenth Flat', 'Half Diminished'];
const st = use('step', 'st', '0 0 6 10');
$('events').innerHTML = Array.from({ length: 35 }, (_, i) => {
  if (i > 30) return '<tr>' + '<td></td>'.repeat(7) + '<td class="l"></td></tr>';
  const v = i < 29 ? i : 30 - i;
  const at = i === 8 ? '65. 4.' : `${2 + i * 8}. 1.`;
  const tick = i === 8 ? '808.' : (i < 2 || i > 28) ? 0 : 2;
  return `<tr class="${i === 17 ? 'now' : ''}"><td></td><td></td><td class="pos"><div class="two"><span>${at}</span><span>${tick}</span></div></td><td class="s">Program</td><td>1</td><td class="n"><div class="two">+${st}</div></td><td>${v}</td><td class="l"><div class="two">${v} = ${info[v]}${st}</div></td></tr>`;
}).join('');

// Environment pads
const pad = (cls, text = '') => `<button class="pad ${cls}"><span>${text}</span></button>`;
$('auto').innerHTML = pad('p red', 'Auto On') + pad('p lit') + pad('p').repeat(6);
const keys = ['C', 'C#', 'D', 'D#', 'E', 'F', 'F#', 'G', 'G#', 'A', 'A#', 'B'];
const chords = ['Major', 'Minor', 'Diminished', 'Diminished Seventh', 'Augmented', 'Dominant 7th', 'Minor 7th', 'Major 7th', 'Major 6th', 'Minor 6th',
  '7th Sharp 5', '7th Flat 5', 'Major 7th Flat 3rd', 'Minor 7th Flat 5', '7th Suspended 4th', '9th', 'Minor 9th', 'Major 9th', '9th Augmented 5th',
  '9th Flatted 5th', '7th Flatted 9th', '7th Sharp 9th', '6 Add 9', 'Eleventh', 'Augmented Eleventh', 'Thirteenth', 'Thirteenth Flat 9th', 'Thirteenth Flat 9th Flat', 'Half Diminished'];
$('pads').innerHTML =
  keys.map(k => `<div class="cell one">${pad('k' + (k === 'F' ? ' lit' : ''))}${k}</div>`).join('') +
  ['Tonic', '1st Inversion', '2nd Inversion'].map(k => `<div class="cell">${pad('o' + (k[0] === '1' ? ' lit' : ''))}${k}</div>`).join('') +
  '<div class="cell gap"></div>' +
  chords.map(k => `<div class="cell">${pad('c' + (k === 'Major 9th' ? ' lit' : ''))}${k}</div>`).join('');

// Monitors
const mons = [
  ['Rhythm', 1, 102, 'G3 G4 E4 F♯4 D4 B3 F♯4 D4 B3 G3 E3 G4 E4 C4 A3 F3 F4 G4 E4 C4 A3'],
  ['Arpeggio', 2, 102, 'F4 A3 C4 E4 G4 F4 A4 C4 E4 G4 F4 A4 C4 E4 G4 F4 A3 C4 E4 G4 F3'],
  ['Melody', 3, 127, 'C4 C♯4 D4 D♯4 E4 F4 F♯4 G4 G♯4 A4 A♯4 B4 C4 C♯4 D4 D♯4 E4 F4']
];
$('mons').innerHTML = mons.map(([n, ch, vel, notes]) => `<div class="mon"><ol>${notes.split(' ').map(x => `<li><span>${ch}</span><span>${x}</span><span>${vel}</span></li>`).join('')}</ol>${n}</div>`).join('');
```
